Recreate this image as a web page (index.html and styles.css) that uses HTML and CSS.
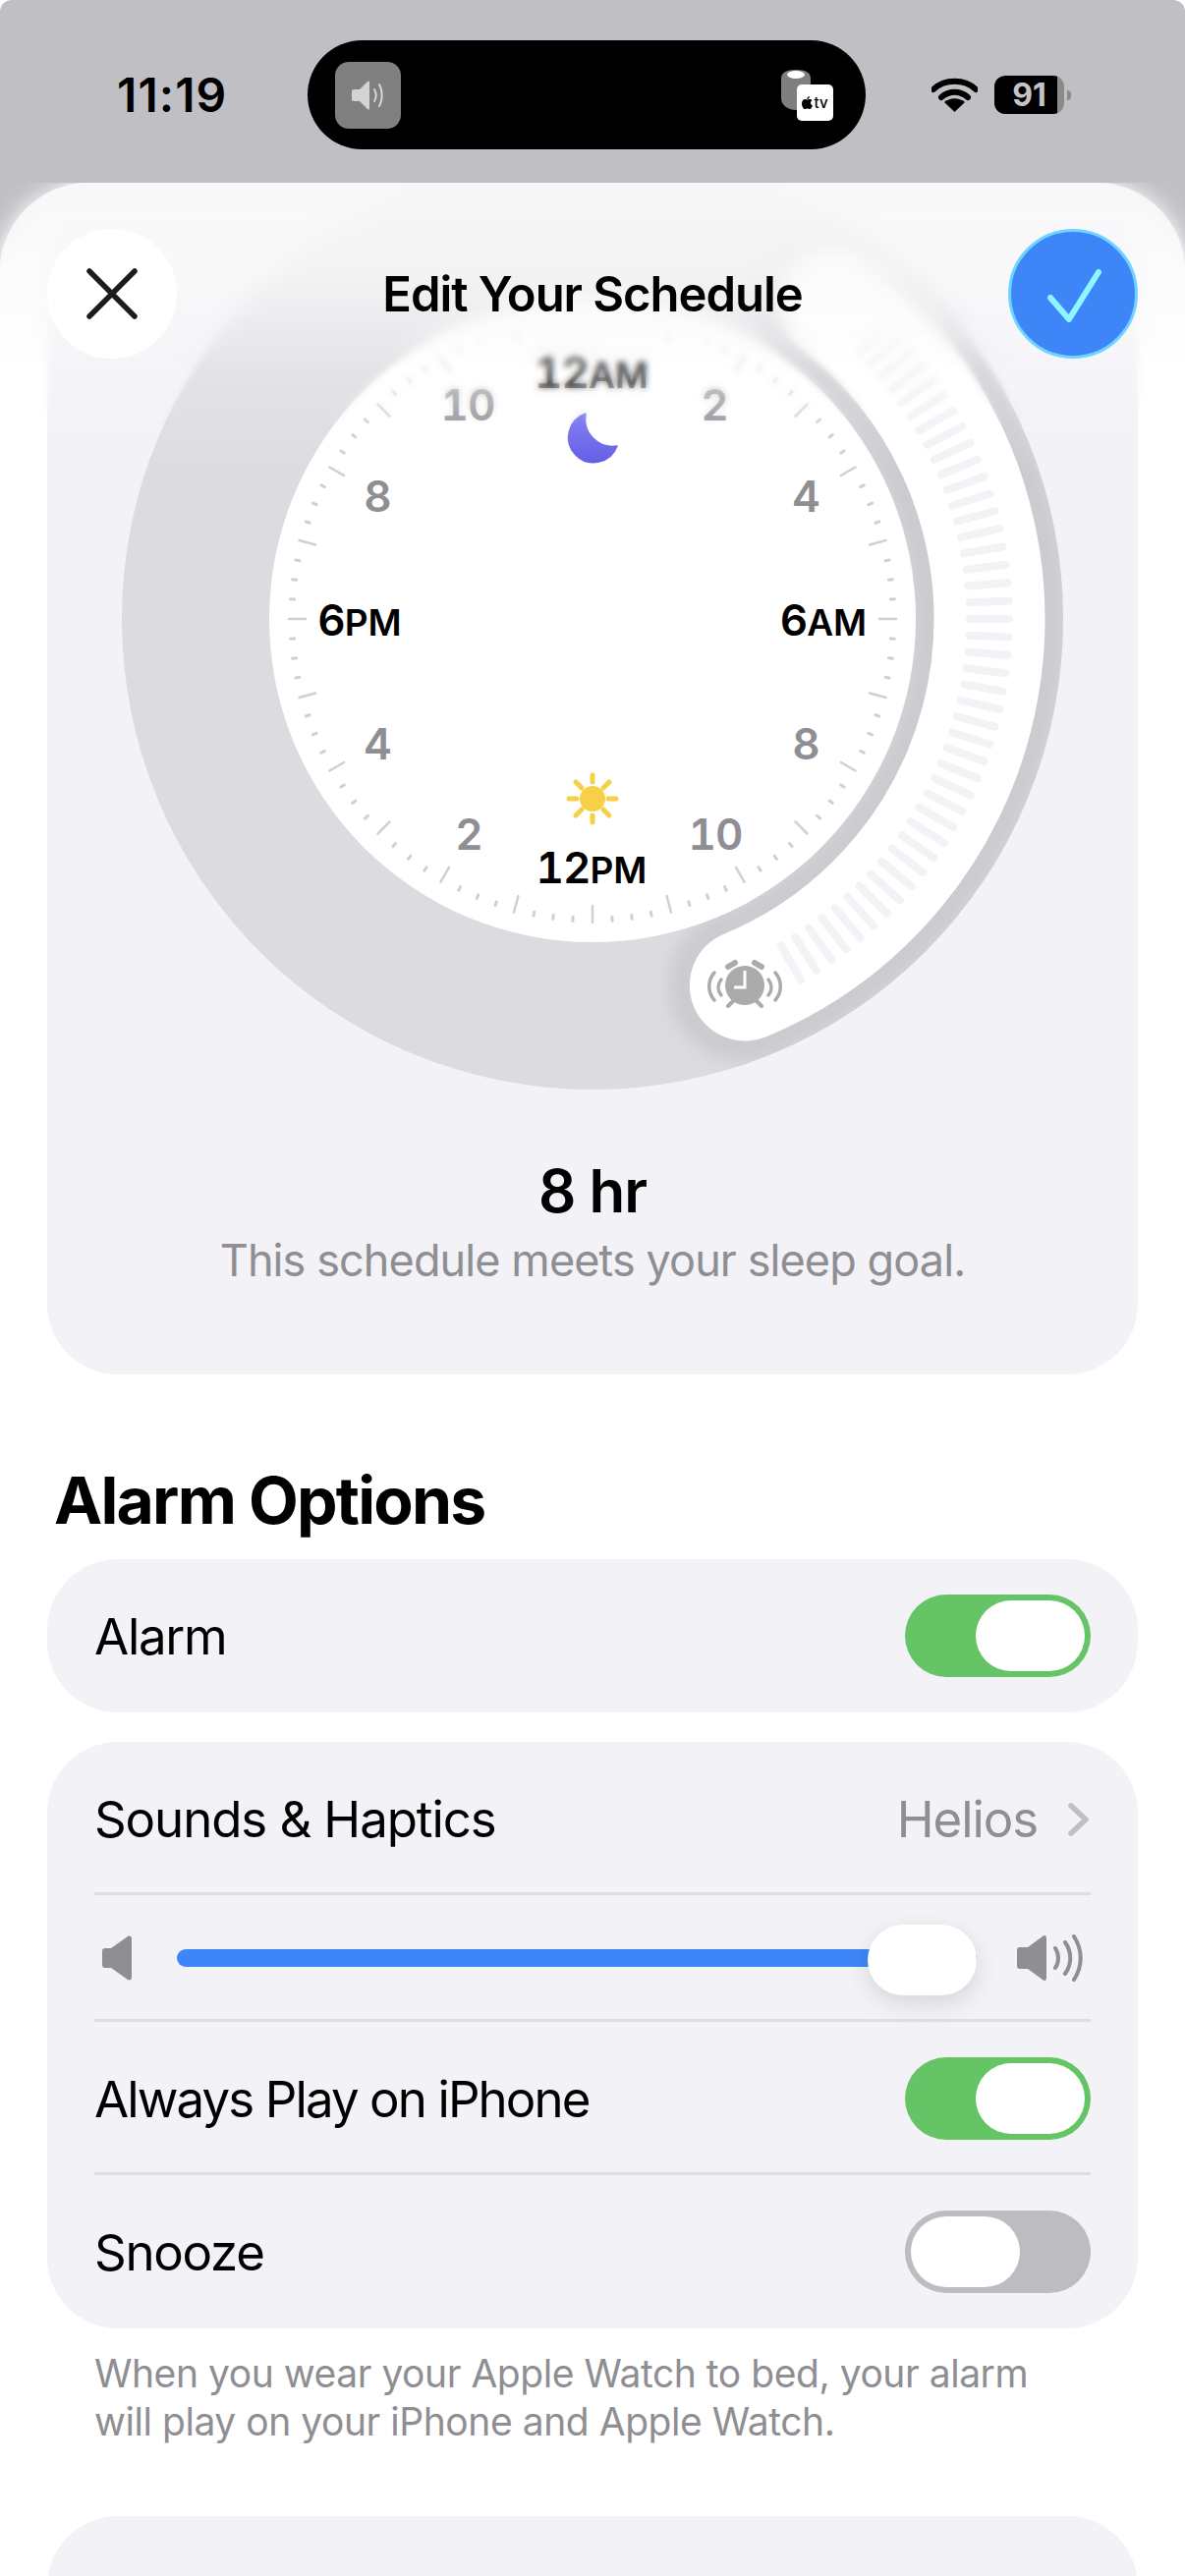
FILE: index.html
```html
<!DOCTYPE html>
<html lang="en">
<head>
    <meta charset="UTF-8">
    <meta name="viewport" content="width=device-width, initial-scale=1.0">
    <title>Edit Your Schedule</title>
    <link rel="stylesheet" href="styles.css">
</head>
<body>
    <div id="screen">
        <div class="status">
            <div class="time">11:19</div>
            <div class="island">
                <div class="island-tile">
                    <svg width="36" height="40" viewBox="0 0 36 40">
                        <path d="M3 14h6l8-8c1-1 2-.5 2 1v26c0 1.500-1 2-2 1l-8-8H3c-1 0-2-1-2-2V16c0-1 1-2 2-2z" fill="#d4d4d4"/>
                        <path d="M24 14c2 3.500 2 8.500 0 12M29 9c3.500 6 3.500 16 0 22" fill="none" stroke="#d4d4d4" stroke-width="2" stroke-linecap="round"/>
                    </svg>
                </div>
                <div class="island-media">
                    <svg class="homepod" width="32" height="41" viewBox="0 0 32 41">
                        <path d="M1 9C1 3 6 0 16 0s15 3 15 9v20c0 8-8 12-15 12S1 37 1 29z" fill="#7f7f7f"/>
                        <ellipse cx="16" cy="5" rx="9" ry="4" fill="#fff"/>
                    </svg>
                    <div class="tv-tile">
                        <svg width="11" height="13" viewBox="0 0 11 13">
                            <path d="M8 0c0 1.500-1.200 3-2.700 3C5.200 1.500 6.500.2 8 0zM5.300 3.500c.7 0 1.400-.6 2.600-.6 1 0 2 .5 2.600 1.400-2.200 1.300-1.800 4.300.5 5.200-.7 1.700-1.800 3.500-3 3.500-.9 0-1.200-.6-2.400-.6s-1.600.6-2.400.6C1.500 13 0 9.800 0 7.400c0-2.700 1.700-4.300 3.200-4.300 1 0 1.500.4 2.100.4z" fill="#000"/>
                        </svg>
                        <span>tv</span>
                    </div>
                </div>
            </div>
            <svg class="wifi" width="47" height="35" viewBox="0 0 47 35">
                <path d="M2 12C13 1 34 1 45 12M10 20c8-7 19-7 27 0" fill="none" stroke="#000" stroke-width="6" stroke-linecap="round"/>
                <path d="M13 25c6-5 15-5 21 0L23.500 35z" fill="#000"/>
            </svg>
            <div class="battery">91</div>
            <div class="battery-nub"></div>
        </div>

        <div class="sheet">
            <div class="card sleep-card">
                <svg class="dial" width="1110" height="960" viewBox="48 186 1110 960">
                    <defs>
                        <clipPath id="ring-clip"><circle cx="603" cy="630" r="479"/></clipPath>
                        <filter id="soft" filterUnits="userSpaceOnUse" x="48" y="100" width="1110" height="1100"><feGaussianBlur stdDeviation="8"/></filter>
                        <linearGradient id="moon-fill" x1="0" y1="0" x2="0" y2="1">
                            <stop offset="0" stop-color="#7069ef"/>
                            <stop offset="1" stop-color="#5e5ae6"/>
                        </linearGradient>
                    </defs>
                    <circle cx="603" cy="630" r="479" fill="#dbdbe0"/>
                    <g clip-path="url(#ring-clip)">
                        <path d="M848.400 309.100A404 404 0 0 1 758.300 1003" fill="none" stroke="#cbcbd0" stroke-width="156" stroke-linecap="round" filter="url(#soft)"/>
                    </g>
                    <circle cx="603" cy="630" r="329" fill="#fff"/>
                    <path d="M848.400 309.100A404 404 0 0 1 758.300 1003" fill="none" stroke="#fff" stroke-width="113" stroke-linecap="round"/>
                    <g id="stripes" stroke="#f2f2f7" stroke-width="8" stroke-linecap="round"></g>
                    <g id="ticks" stroke="#d0d0d4" stroke-linecap="round"></g>

                    <g class="hour">
                        <text x="476" y="428">10</text>
                        <text x="727" y="428">2</text>
                        <text x="384" y="521">8</text>
                        <text x="820" y="521">4</text>
                        <text x="384" y="773">4</text>
                        <text x="820" y="773">8</text>
                        <text x="477" y="865">2</text>
                        <text x="728" y="865">10</text>
                    </g>
                    <g class="hour main">
                        <text x="366" y="647">6<tspan class="ampm">PM</tspan></text>
                        <text x="838" y="647">6<tspan class="ampm">AM</tspan></text>
                        <text x="602" y="395" class="dim">12<tspan class="ampm">AM</tspan></text>
                        <text x="602" y="899">12<tspan class="ampm">PM</tspan></text>
                    </g>

                    <path d="M596 421A25.500 25.500 0 1 0 628 454A28 28 0 0 1 596 421z" fill="url(#moon-fill)" stroke="url(#moon-fill)" stroke-width="1.500" stroke-linejoin="round"/>

                    <g stroke="#f7d047" stroke-width="5" stroke-linecap="round">
                        <path d="M603 789v7M603 830v7M579 813h8M619 813h8M586 796l6 6M614 824l6 6M620 796l-6 6M592 824l-6 6"/>
                    </g>
                    <circle cx="603" cy="813" r="13" fill="#f7d047"/>

                    <g class="alarm-icon">
                        <circle cx="758" cy="1003" r="20" fill="#ababad"/>
                        <path d="M758 988v17h-11" fill="none" stroke="#fff" stroke-width="3"/>
                        <path d="M741 984l7-4M775 984l-7-4" fill="none" stroke="#ababad" stroke-width="6" stroke-linecap="round"/>
                        <path d="M746 1019l-5 5M770 1019l5 5" fill="none" stroke="#ababad" stroke-width="4" stroke-linecap="round"/>
                        <path d="M727 990c-7 8-7 20 0 28M734 997c-4 5-4 11 0 16M789 990c7 8 7 20 0 28M782 997c4 5 4 11 0 16" fill="none" stroke="#ababad" stroke-width="3.500" stroke-linecap="round"/>
                    </g>
                </svg>
                <div class="goal">
                    <div class="goal-hours">8 hr</div>
                    <div class="goal-text">This schedule meets your sleep goal.</div>
                </div>
            </div>

            <h2 class="section-title">Alarm Options</h2>

            <div class="card list-card">
                <div class="row row-alarm">
                    <span class="label">Alarm</span>
                    <div class="switch on"><div class="knob"></div></div>
                </div>
            </div>

            <div class="card list-card options">
                <div class="row row-sounds">
                    <span class="label">Sounds &amp; Haptics</span>
                    <span class="value">Helios</span>
                    <svg class="chevron" width="24" height="36" viewBox="0 0 24 36">
                        <path d="M4 4l15 14L4 32" fill="none" stroke="#bfbfc4" stroke-width="5.500" stroke-linecap="round" stroke-linejoin="round"/>
                    </svg>
                </div>
                <div class="row row-volume">
                    <svg class="speaker-low" width="30" height="46" viewBox="0 0 30 46">
                        <path d="M3 13h6L26 1c2-1 4 0 4 2v40c0 2-2 3-4 2L9 33H3c-2 0-3-1-3-3V16c0-2 1-3 3-3z" fill="#8e8e93"/>
                    </svg>
                    <div class="track"><div class="track-knob"></div></div>
                    <svg class="speaker-high" width="67" height="48" viewBox="0 0 67 48">
                        <path d="M3 13h8L26 2c2-2 4-1 4 2v40c0 3-2 4-4 2L11 35H3c-2 0-3-1-3-3V16c0-2 1-3 3-3z" fill="#8e8e93"/>
                        <path d="M39 14c4 6 4 14 0 20M49 8c7 10 7 22 0 32M58 2c9 14 9 30 0 44" fill="none" stroke="#8e8e93" stroke-width="4" stroke-linecap="round"/>
                    </svg>
                </div>
                <div class="row row-always">
                    <span class="label">Always Play on iPhone</span>
                    <div class="switch on"><div class="knob"></div></div>
                </div>
                <div class="row row-snooze">
                    <span class="label">Snooze</span>
                    <div class="switch"><div class="knob"></div></div>
                </div>
            </div>

            <p class="footnote">When you wear your Apple Watch to bed, your alarm will play on your iPhone and Apple Watch.</p>

            <div class="card list-card delete-card">Delete Schedule</div>

            <div class="header">
                <div class="blur blur-strong"></div>
                <div class="blur blur-light"></div>
                <div class="wash"></div>
                <div class="header-row">
                    <div class="round-btn close">
                        <svg width="52" height="52" viewBox="0 0 52 52">
                            <path d="M3 3l46 46M49 3L3 49" fill="none" stroke="#1c1c1e" stroke-width="5.500" stroke-linecap="round"/>
                        </svg>
                    </div>
                    <div class="header-title">Edit Your Schedule</div>
                    <div class="round-btn done">
                        <svg width="56" height="56" viewBox="0 0 56 56">
                            <path d="M4 30l19 22L53 4" fill="none" stroke="#8ff6ff" stroke-width="6" stroke-linecap="round" stroke-linejoin="round"/>
                        </svg>
                    </div>
                </div>
            </div>
        </div>
    </div>

    <script src="script.js"></script>
</body>
</html>
```

FILE: styles.css
```css
* {
    box-sizing: border-box;
}
html, body {
    margin: 0;
    padding: 0;
    background: #fff;
}
body {
    width: 1206px;
    height: 2622px;
    overflow: hidden;
    font-family: 'Inter', 'Liberation Sans', sans-serif;
    color: #000;
}
#screen {
    height: 2622px;
    display: flex;
    flex-direction: column;
    background: #c0bfc4;
    border-radius: 12px 12px 0 0;
    overflow: hidden;
}

/* status bar */
.status {
    flex: none;
    height: 186px;
    padding: 41px 0 34px 119px;
    display: flex;
    align-items: center;
}
.time {
    width: 194px;
    font-size: 48px;
    font-weight: 600;
    letter-spacing: 1.1px;
}
.island {
    width: 568px;
    height: 111px;
    background: #000;
    border-radius: 56px;
    padding: 0 33px 0 28px;
    display: flex;
    align-items: center;
    justify-content: space-between;
}
.island-tile {
    width: 67px;
    height: 68px;
    border-radius: 14px;
    background: #808080;
    display: flex;
    align-items: center;
    justify-content: center;
}
.island-media {
    width: 54px;
    height: 52px;
    margin-top: 0;
    position: relative;
}
.homepod {
    position: absolute;
    left: 0;
    top: 0;
}
.tv-tile {
    position: absolute;
    left: 17px;
    top: 15px;
    width: 37px;
    height: 37px;
    background: #fff;
    border-radius: 5px;
    display: flex;
    align-items: center;
    justify-content: center;
    gap: 1px;
    font-size: 15px;
    font-weight: 500;
    color: #000;
}
.wifi {
    margin-left: 67px;
    flex: none;
}
.battery {
    margin-left: 17px;
    width: 71px;
    height: 39px;
    border-radius: 11px;
    background: linear-gradient(to right, #000 90%, #8a8a8a 90%);
    color: #c4c4c8;
    font-size: 32px;
    font-weight: 700;
    line-height: 39px;
    text-align: center;
}
.battery-nub {
    margin-left: 3px;
    width: 4px;
    height: 10px;
    border-radius: 0 4px 4px 0;
    background: #8a8a8a;
}

/* sheet */
.sheet {
    flex: 1;
    position: relative;
    overflow: hidden;
    background: #fff;
    border-radius: 90px 90px 0 0;
    padding: 0 48px;
}
.card {
    background: #f2f2f7;
    border-radius: 72px;
}
.sleep-card {
    height: 1213px;
    border-radius: 0 0 72px 72px;
}
.dial {
    display: block;
}
.hour text {
    font-size: 44px;
    font-weight: 600;
    fill: #8e8e93;
    text-anchor: middle;
    font-variant-numeric: tabular-nums;
    letter-spacing: -1px;
}
.hour.main text {
    fill: #000;
}
.hour.main .ampm {
    font-size: 37px;
    letter-spacing: 0;
}
.goal {
    text-align: center;
    padding-top: 28px;
}
.goal-hours {
    font-size: 60px;
    line-height: 76px;
    font-weight: 600;
    letter-spacing: -1px;
}
.goal-text {
    margin-top: 6px;
    font-size: 45px;
    line-height: 54px;
    color: #8e8e93;
    letter-spacing: -0.9px;
}
.section-title {
    margin: 92px 0 0 7px;
    height: 96px;
    font-size: 66px;
    line-height: 72px;
    font-weight: 700;
    letter-spacing: -1.8px;
}

/* option rows */
.list-card {
    padding: 0 48px;
}
.row {
    display: flex;
    align-items: center;
    font-size: 51px;
    letter-spacing: -1.3px;
}
.label {
    flex: 1;
}
.row-alarm {
    height: 156px;
}
.options {
    margin-top: 30px;
    height: 597px;
}
.row-sounds {
    height: 156px;
    padding-top: 4px;
    letter-spacing: -1.1px;
    border-bottom: 3px solid #dedee3;
}
.row-volume {
    height: 129px;
    border-bottom: 3px solid #dedee3;
    padding: 2px 8px 0;
}
.row-always {
    height: 156px;
    padding-top: 3px;
    letter-spacing: -1.9px;
    border-bottom: 3px solid #dedee3;
}
.row-snooze {
    height: 156px;
}
.value {
    color: #8e8e93;
    margin-right: 30px;
}
.chevron {
    flex: none;
}
.switch {
    flex: none;
    width: 189px;
    height: 84px;
    padding: 6px;
    border-radius: 42px;
    background: #bcbcc1;
    display: flex;
}
.switch.on {
    background: #65c466;
    justify-content: flex-end;
}
.knob {
    width: 111px;
    height: 72px;
    border-radius: 36px;
    background: #fff;
}
.speaker-low, .speaker-high {
    flex: none;
}
.track {
    flex: 1;
    height: 18px;
    margin: 0 41px 0 46px;
    border-radius: 9px;
    background: #3e86f7;
    position: relative;
}
.track-knob {
    position: absolute;
    right: 0;
    top: -25px;
    width: 111px;
    height: 72px;
    border-radius: 36px;
    background: #fff;
    box-shadow: 0 8px 24px rgba(0, 0, 0, 0.12);
}
.footnote {
    margin: 21px 48px 0;
    font-size: 39px;
    line-height: 49px;
    color: #8e8e93;
    letter-spacing: -0.45px;
    width: 980px;
}
.delete-card {
    margin-top: 72px;
    height: 156px;
    padding-top: 16px;
    display: flex;
    align-items: center;
    justify-content: center;
    font-size: 51px;
    color: #ff3b30;
    letter-spacing: -1.3px;
}

/* header that floats over the dial */
.header {
    position: absolute;
    left: 0;
    top: 0;
    right: 0;
    height: 320px;
}
.blur, .wash {
    position: absolute;
    left: 0;
    right: 0;
    top: 0;
}
.blur-strong {
    height: 190px;
    -webkit-backdrop-filter: blur(11px);
    backdrop-filter: blur(11px);
    -webkit-mask-image: linear-gradient(to bottom, #000 70%, transparent);
    mask-image: linear-gradient(to bottom, #000 70%, transparent);
}
.blur-light {
    height: 250px;
    -webkit-backdrop-filter: blur(3px);
    backdrop-filter: blur(3px);
    -webkit-mask-image: linear-gradient(to bottom, #000 75%, transparent);
    mask-image: linear-gradient(to bottom, #000 75%, transparent);
}
.wash {
    height: 300px;
    background: linear-gradient(to bottom, rgba(249, 249, 250, 0.92), rgba(250, 250, 251, 0.78) 30%, rgba(255, 255, 255, 0.25) 65%, rgba(255, 255, 255, 0));
}
.header-row {
    position: relative;
    padding: 47px 48px 0;
    display: flex;
    align-items: center;
    justify-content: space-between;
}
.round-btn {
    width: 132px;
    height: 132px;
    border-radius: 50%;
    display: flex;
    align-items: center;
    justify-content: center;
}
.close {
    background: #fff;
}
.done {
    background: #3e86f7;
    border: 3px solid #6fd4ff;
}
.done svg {
    margin: 3px 0 0 2px;
}
.header-title {
    font-size: 49px;
    font-weight: 600;
    letter-spacing: -1.05px;
}
```

FILE: script.js
```js
// draws the clock ticks and the stripes on the sleep band
const svgNS = "http://www.w3.org/2000/svg";
const cx = 603;
const cy = 630;

function radialLine(parent, angle, r1, r2, width) {
    const a = angle * Math.PI / 180;
    const line = document.createElementNS(svgNS, "line");
    line.setAttribute("x1", cx + r1 * Math.sin(a));
    line.setAttribute("y1", cy - r1 * Math.cos(a));
    line.setAttribute("x2", cx + r2 * Math.sin(a));
    line.setAttribute("y2", cy - r2 * Math.cos(a));
    if (width) line.setAttribute("stroke-width", width);
    parent.appendChild(line);
}

const ticks = document.getElementById("ticks");
for (let i = 0; i < 96; i++) {
    if (i % 4 === 0) {
        radialLine(ticks, i * 3.75, 292, 309, 2.5);
    } else {
        radialLine(ticks, i * 3.75, 304, 308, 3);
    }
}

const stripes = document.getElementById("stripes");
for (let angle = 45; angle <= 150; angle += 2.5) {
    radialLine(stripes, angle, 384, 424);
}
```
